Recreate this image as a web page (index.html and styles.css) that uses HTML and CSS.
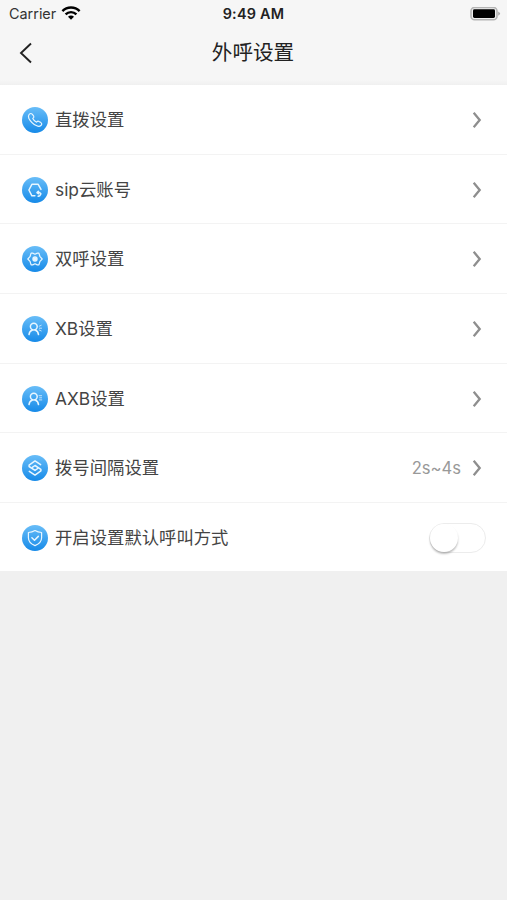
FILE: index.html
```html
<!DOCTYPE html>
<html lang="zh-CN">
<head>
  <meta charset="UTF-8" />
  <meta name="viewport" content="width=device-width, initial-scale=1.0" />
  <title>外呼设置</title>
  <link rel="stylesheet" href="styles.css">
</head>
<body>
  <header class="header">
    <div class="statusbar">
      <div class="carrier">
        <span>Carrier</span>
        <svg class="wifi" viewBox="0 0 20 14">
          <path d="M1.4 5.2a12 12 0 0 1 17.2 0M4.6 8.4a7.6 7.6 0 0 1 10.8 0" />
          <path class="dot" d="M7 10.8a4.2 4.2 0 0 1 6 0l-3 3z" />
        </svg>
      </div>
      <div class="time">9:49 AM</div>
      <div class="battery-box">
        <svg class="battery" viewBox="0 0 32 14">
          <rect x="2" y=".4" width="26" height="12.4" rx="3.6" fill="#eee" stroke="#b4b4b4" stroke-width="1.6" />
          <rect x="4" y="2.2" width="22" height="8.8" rx="1.4" />
          <path d="M29.2 4.4q2 1.2 2 2.2t-2 2.2z" fill="#aaa" />
        </svg>
      </div>
    </div>
    <nav class="navbar">
      <svg class="back" viewBox="0 0 14 22"><path d="M12 1.5 2 11l10 9.5" /></svg>
      <h1>外呼设置</h1>
    </nav>
  </header>

  <main class="liste">
    <div class="row">
      <span class="icon"><svg viewBox="0 0 26 26"><path d="M7.2 7.4Q8.9 5.6 10.4 7.4L11.7 9.1Q12.4 10.2 10.8 11.5Q12 14 14.5 15.2Q15.8 13.6 17 14.4L18.9 15.6Q20.6 17 18.9 18.5Q17.2 20 14.8 18.8Q9.3 16.3 6.8 11.2Q5.9 8.8 7.2 7.4Z" /></svg></span>
      <span class="label">直拨设置</span>
      <svg class="arrow" viewBox="0 0 10 18"><path d="m1.7 1.8 6 7.2-6 7.2" /></svg>
    </div>
    <div class="row">
      <span class="icon"><svg viewBox="0 0 26 26"><path class="thick" d="m19 12.4-2.8-5.1H9.9L6.9 13l3 5.8h3" /><path class="thick" d="M15 15.6h2.6l1.3 1.2-1.1 1.9-1.6.5M16.4 14.2 15 15.6l1.4 1.2" /></svg></span>
      <span class="label">sip云账号</span>
      <svg class="arrow" viewBox="0 0 10 18"><path d="m1.7 1.8 6 7.2-6 7.2" /></svg>
    </div>
    <div class="row">
      <span class="icon"><svg viewBox="0 0 26 26"><path d="M9.1 7.1h1.6L13 8.2l2.3-1.1h1.6l1.1 3.6 2.2 2.3-2.2 2.3-1.1 3.6h-1.6L13 17.8l-2.3 1.1H9.1L8 15.3 5.8 13 8 10.7z" /><circle class="fill" cx="13" cy="13" r="2.1" /></svg></span>
      <span class="label">双呼设置</span>
      <svg class="arrow" viewBox="0 0 10 18"><path d="m1.7 1.8 6 7.2-6 7.2" /></svg>
    </div>
    <div class="row">
      <span class="icon"><svg viewBox="0 0 26 26"><circle class="thick" cx="11.8" cy="10.6" r="3.4" /><path class="thick" d="M7 18.6q.3-3.6 3.4-4.6M13.2 14q3 1 3.3 4.6" /><path class="thin" d="m17.2 10.2 2-.9M17.4 12.2h2.2M17.2 14l2 .9" /></svg></span>
      <span class="label">XB设置</span>
      <svg class="arrow" viewBox="0 0 10 18"><path d="m1.7 1.8 6 7.2-6 7.2" /></svg>
    </div>
    <div class="row">
      <span class="icon"><svg viewBox="0 0 26 26"><circle class="thick" cx="11.8" cy="10.6" r="3.4" /><path class="thick" d="M7 18.6q.3-3.6 3.4-4.6M13.2 14q3 1 3.3 4.6" /><path class="thin" d="M17 9.7h2.6M17.6 11.8h2M17.3 13.9h2.5" /></svg></span>
      <span class="label">AXB设置</span>
      <svg class="arrow" viewBox="0 0 10 18"><path d="m1.7 1.8 6 7.2-6 7.2" /></svg>
    </div>
    <div class="row">
      <span class="icon"><svg viewBox="0 0 26 26"><path class="thick" d="M18.6 9.6 13 5.9l-5.9 4.2v1.4l5.9 3.9 2.7-1.9" /><path class="thick" d="M7.3 16.3 13 20.1l5.9-4.2v-1.6L13 10.5l-2.7 1.9" /></svg></span>
      <span class="label">拨号间隔设置</span>
      <span class="value">2s~4s</span>
      <svg class="arrow" viewBox="0 0 10 18"><path d="m1.7 1.8 6 7.2-6 7.2" /></svg>
    </div>
    <div class="row">
      <span class="icon"><svg viewBox="0 0 26 26"><path d="M13 5.6q3 1.9 6.6 1.9v5.2q0 5.1-6.6 7.9-6.6-2.8-6.6-7.9V7.5q3.6 0 6.6-1.9z" /><path class="thick" d="m9.9 12.8 2.6 2.4 3.8-3.8" /></svg></span>
      <span class="label">开启设置默认呼叫方式</span>
      <span class="switch"><span class="knob"></span></span>
    </div>
  </main>
</body>
</html>
```

FILE: styles.css
```css
* {
  box-sizing: border-box;
}
body {
  margin: 0;
  min-height: 100vh;
  background: #f0f0f0;
  font-family: Inter, "Noto Sans CJK SC", sans-serif;
  color: #444;
}
.header {
  height: 85px;
  background: linear-gradient(#f6f6f6 80px, #f0f0f0);
  color: #222;
}
.statusbar {
  display: grid;
  grid-template-columns: 1fr auto 1fr;
  align-items: center;
  height: 27px;
  padding: 0 6px 0 9px;
}
.carrier {
  display: flex;
  align-items: center;
  gap: 5px;
  font-size: 14.4px;
  color: #333;
}
.wifi {
  width: 20px;
  height: 14px;
  margin-top: -2px;
  fill: none;
  stroke: #000;
  stroke-width: 2.4;
}
.wifi .dot {
  fill: #000;
  stroke: none;
}
.time {
  margin-left: -3px;
  font-size: 14.4px;
  font-weight: 600;
  letter-spacing: 0.25px;
}
.battery-box {
  display: flex;
  justify-content: flex-end;
}
.battery {
  width: 32px;
  height: 14px;
}
.navbar {
  display: grid;
  grid-template-columns: 1fr auto 1fr;
  align-items: center;
  height: 51px;
  padding: 0 20px 0 19px;
}
.back {
  width: 14px;
  height: 22px;
  fill: none;
  stroke: #222;
  stroke-width: 1.9;
}
h1 {
  margin: 0;
  font-size: 20.6px;
  font-weight: 400;
  line-height: 30px;
}
.liste {
  background: #fff;
}
.row {
  display: flex;
  align-items: center;
  height: 69.7px;
  padding: 1px 21px 0 22px;
  border-bottom: 1px solid #f3f3f3;
}
.row:last-child {
  height: 68px;
  padding-top: 2px;
  border-bottom: 0;
}
.icon {
  width: 26px;
  height: 26px;
  border-radius: 50%;
  background: linear-gradient(#68bdf8, #168ae8);
}
.icon svg {
  display: block;
  fill: none;
  stroke: #e8f6ff;
  stroke-width: 1.2;
  stroke-linecap: round;
  stroke-linejoin: round;
}
.icon .fill {
  fill: #e8f6ff;
}
.icon .thick {
  stroke-width: 1.5;
}
.icon .thin {
  stroke-width: 1;
  opacity: 0.75;
}
.label {
  flex: 1;
  margin-left: 7px;
  font-size: 17.35px;
  line-height: 26px;
}
.value {
  margin-right: 11px;
  font-size: 16.6px;
  color: #999;
}
.arrow {
  width: 10px;
  height: 18px;
  margin-right: 4px;
  fill: none;
  stroke: #8e8e8e;
  stroke-width: 2.3;
}
.switch {
  width: 57px;
  height: 30px;
  border: 1.5px solid #ececec;
  border-radius: 15px;
}
.knob {
  display: block;
  width: 28px;
  height: 28px;
  border-radius: 50%;
  background: #fff;
  box-shadow: 0 2px 2px rgba(0, 0, 0, 0.25);
}
```
